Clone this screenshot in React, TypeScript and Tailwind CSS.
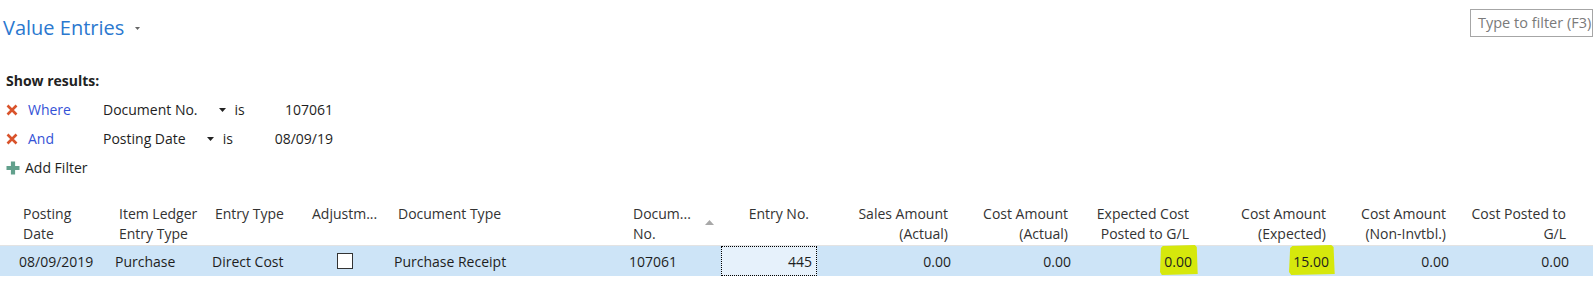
import React from "react";

const XIcon = () => (
  <svg width="12" height="12" viewBox="0 0 12 12" className="shrink-0">
    <path d="M1.5 1.5 L10.5 10.5 M10.5 1.5 L1.5 10.5" stroke="#d9532b" strokeWidth="2.6" strokeLinecap="butt" />
  </svg>
);

const PlusIcon = () => (
  <svg width="14" height="14" viewBox="0 0 14 14" className="shrink-0">
    <path d="M7 0.5 V13.5 M0.5 7 H13.5" stroke="#62a08c" strokeWidth="4.2" />
  </svg>
);

const Caret = ({ color = "#222", w = 7, h = 4 }: { color?: string; w?: number; h?: number }) => (
  <svg width={w} height={h} viewBox={`0 0 ${w} ${h}`} className="shrink-0">
    <path d={`M0 0 H${w} L${w / 2} ${h} Z`} fill={color} />
  </svg>
);

const Hl = ({ children }: { children: React.ReactNode }) => (
  <span className="relative inline-block">
    <svg
      className="absolute -left-[4px] -top-[6px] w-[calc(100%+10px)] h-[calc(100%+9px)]"
      viewBox="0 0 40 30"
      preserveAspectRatio="none"
    >
      <path d="M3 1 L37 0 L39 2 L40 29 L2 30 L0 27 L1 3 Z" fill="#d6e80c" />
    </svg>
    <span className="relative">{children}</span>
  </span>
);

type Col = {
  w: string;
  head: React.ReactNode;
  hp: string;
  vp: string;
  val: React.ReactNode;
};

const cols: Col[] = [
  { w: "w-[96px]", head: <>Posting<br />Date</>, hp: "pl-[7px]", vp: "pl-[3px]", val: "08/09/2019" },
  { w: "w-[97px]", head: <>Item Ledger<br />Entry Type</>, hp: "pl-[7px]", vp: "pl-[3px]", val: "Purchase" },
  { w: "w-[100px]", head: "Entry Type", hp: "pl-[6px]", vp: "pl-[3px]", val: "Direct Cost" },
  {
    w: "w-[82px]",
    head: "Adjustm...",
    hp: "pl-[3px]",
    vp: "pl-[28px]",
    val: <span className="block w-[16px] h-[16px] border border-[#333] bg-white" />,
  },
  { w: "w-[234px]", head: "Document Type", hp: "pl-[7px]", vp: "pl-[3px]", val: "Purchase Receipt" },
];

const numCols: { w: string; head: React.ReactNode; val: React.ReactNode }[] = [
  { w: "w-[137px]", head: <>Sales Amount<br />(Actual)</>, val: "0.00" },
  { w: "w-[120px]", head: <>Cost Amount<br />(Actual)</>, val: "0.00" },
  { w: "w-[121px]", head: <>Expected Cost<br />Posted to G/L</>, val: <Hl>0.00</Hl> },
  { w: "w-[137px]", head: <>Cost Amount<br />(Expected)</>, val: <Hl>15.00</Hl> },
  { w: "w-[120px]", head: <>Cost Amount<br />(Non-Invtbl.)</>, val: "0.00" },
  { w: "w-[120px]", head: <>Cost Posted to<br />G/L</>, val: "0.00" },
];

export default function App() {
  return (
    <div className="w-[1593px] h-[304px] bg-white overflow-hidden font-['Open_Sans',sans-serif] text-[14px] text-[#1e1e1e]">
      {/* Top bar */}
      <div className="flex items-start justify-between">
        <div className="flex items-center mt-[14px] h-[28px] pl-[3px]">
          <span className="text-[20px] leading-[28px] text-[#2b78cf]">Value Entries</span>
          <span className="ml-[11px] mt-[1px]">
            <Caret color="#666" w={5} h={3} />
          </span>
        </div>
        <div className="mt-[9px] w-[123px] h-[28px] border border-[#a6a6a6] pl-[7px] flex items-center text-[14.5px] text-[#7a7a7a] whitespace-nowrap overflow-hidden">
          Type to filter (F3)
        </div>
      </div>

      {/* Filters */}
      <div className="pl-[6px] mt-[29px] h-[20px] leading-[20px] font-bold text-[#222]">Show results:</div>
      <div className="mt-[4px] pl-[6px]">
        {[
          { op: "Where", field: "Document No.", value: "107061" },
          { op: "And", field: "Posting Date", value: "08/09/19" },
        ].map((f) => (
          <div key={f.op} className="flex items-center h-[29px]">
            <XIcon />
            <span className="ml-[10px] w-[75px] text-[#3452d6]">{f.op}</span>
            <div className="flex items-center w-[230px]">
              <span>{f.field}</span>
              <span className="ml-[21px]">
                <Caret />
              </span>
              <span className="ml-[9px]">is</span>
              <span className="ml-auto">{f.value}</span>
            </div>
          </div>
        ))}
        <div className="flex items-center h-[29px]">
          <PlusIcon />
          <span className="ml-[5px]">Add Filter</span>
        </div>
      </div>

      {/* Table */}
      <div className="mt-[22px]">
        <div className="flex h-[42px] border-b border-[#e3e3e3] text-[#333] leading-[20px]">
          <div className="w-[16px]" />
          {cols.map((c, i) => (
            <div key={i} className={`${c.w} ${c.hp} whitespace-nowrap`}>
              {c.head}
            </div>
          ))}
          <div className="w-[96px] pl-[8px] pr-[7px] flex items-start">
            <span>
              Docum...
              <br />
              No.
            </span>
            <span className="ml-auto mt-[16px]">
              <svg width="9" height="5" viewBox="0 0 9 5" className="block">
                <path d="M0 5 L4.5 0 L9 5 Z" fill="#a8a8a8" />
              </svg>
            </span>
          </div>
          <div className="w-[96px] pr-[8px] text-right">Entry No.</div>
          {numCols.map((c, i) => (
            <div key={i} className={`${c.w} pr-[6px] text-right whitespace-nowrap`}>
              {c.head}
            </div>
          ))}
        </div>
        <div className="flex h-[30px] bg-[#cde4f7] items-stretch">
          <div className="w-[16px]" />
          {cols.map((c, i) => (
            <div key={i} className={`${c.w} ${c.vp} flex items-center whitespace-nowrap`}>
              {c.val}
            </div>
          ))}
          <div className="w-[96px] pl-[4px] flex items-center">107061</div>
          <div className="w-[96px] pr-[4px] flex items-center justify-end bg-[#e6f1fb] border border-dotted border-black">
            445
          </div>
          {numCols.map((c, i) => (
            <div key={i} className={`${c.w} pr-[3px] flex items-center justify-end whitespace-nowrap`}>
              {c.val}
            </div>
          ))}
        </div>
      </div>
    </div>
  );
}
